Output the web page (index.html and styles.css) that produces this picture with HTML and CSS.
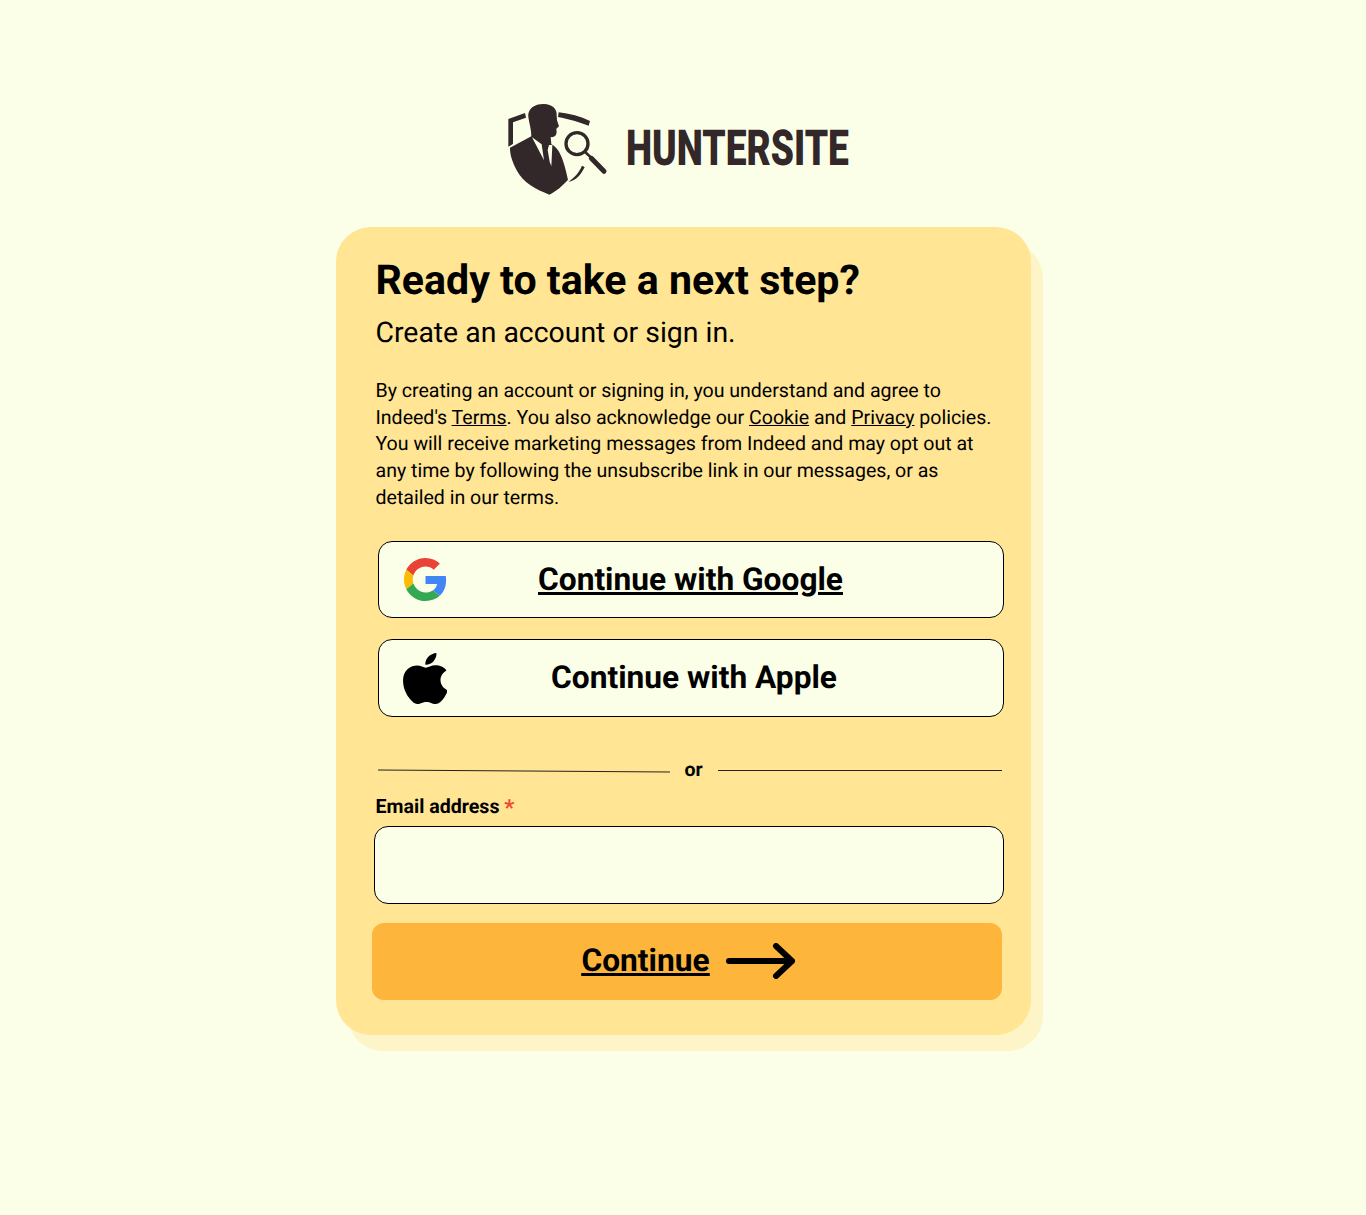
FILE: index.html
```html
<!DOCTYPE html>
<html lang="en">
<head>
<meta charset="utf-8">
<title>Huntersite</title>
<link rel="stylesheet" href="styles.css">
</head>
<body>
<main class="page">
  <header class="brand">
    <svg class="brand-mark" viewBox="0 0 345 315" aria-hidden="true">
      <path class="ink" d="M25 72 L75 54 L78 68 L39 82 L39 146 C36 149 30 152 25 155 Z"/>
      <path class="ink" d="M176 52 C208 56 242 64 270 78 L266 92 C240 82 205 72 174 66 Z"/>
      <path class="ink" d="M85 66 C82 40 106 26 132 27 C156 27 172 42 170 62 L171 76 L177 94 L169 101 L170 112 C169 124 160 128 152 126 L154 148 C178 160 190 190 204 254 C190 270 170 288 148 299 C108 284 70 264 50 226 C36 198 30 180 30 158 L94 124 C94 104 88 86 85 66 Z"/>
      <path class="gap-fill" d="M96 127 L125 148 L127 162 L132 196 Z"/>
      <path class="gap-fill" d="M147 150 L157 150 L154 214 L149 200 L143 165 Z"/>
      <path class="ink" d="M205 260 C224 248 236 234 246 212 L254 216 C242 242 226 258 205 260 Z"/>
      <circle class="ring" cx="231" cy="146" r="33"/>
      <path class="handle-thin" d="M256 172 L274 188"/>
      <path class="handle" d="M274 190 L312 229"/>
    </svg>
    <span class="brand-name">HUNTERSITE</span>
  </header>

  <section class="card">
    <h1 class="title">Ready to take a next step?</h1>
    <p class="subtitle">Create an account or sign in.</p>
    <p class="legal">By creating an account or signing in, you understand and agree to Indeed's <a href="#">Terms</a>. You also acknowledge our <a href="#">Cookie</a> and <a href="#">Privacy</a> policies. You will receive marketing messages from Indeed and may opt out at any time by following the unsubscribe link in our messages, or as detailed in our terms.</p>

    <div class="providers">
      <a class="provider" href="#">
        <svg class="provider-icon" viewBox="0 0 48 48" aria-hidden="true">
          <path fill="#EA4335" d="M24 9.5c3.54 0 6.71 1.22 9.21 3.6l6.85-6.85C35.9 2.38 30.47 0 24 0 14.62 0 6.51 5.38 2.56 13.22l7.98 6.19C12.43 13.72 17.74 9.5 24 9.5z"/>
          <path fill="#4285F4" d="M46.98 24.55c0-1.57-.15-3.09-.38-4.55H24v9.02h12.94c-.58 2.96-2.26 5.48-4.78 7.18l7.73 6c4.51-4.18 7.09-10.36 7.09-17.65z"/>
          <path fill="#FBBC05" d="M10.53 28.59c-.48-1.45-.76-2.99-.76-4.59s.27-3.14.76-4.59l-7.98-6.19C.92 16.46 0 20.12 0 24c0 3.88.92 7.54 2.56 10.78l7.97-6.19z"/>
          <path fill="#34A853" d="M24 48c6.48 0 11.93-2.13 15.89-5.81l-7.73-6c-2.15 1.45-4.92 2.3-8.16 2.3-6.26 0-11.57-4.22-13.47-9.91l-7.98 6.19C6.51 42.62 14.62 48 24 48z"/>
        </svg>
        <span class="provider-label">Continue with Google</span>
      </a>
      <button class="provider provider-apple" type="button">
        <svg class="provider-icon apple-icon" viewBox="2.2 0 19.2 24" preserveAspectRatio="none" aria-hidden="true">
          <path d="M12.152 6.896c-.948 0-2.415-1.078-3.96-1.04-2.04.027-3.91 1.183-4.961 3.014-2.117 3.675-.546 9.103 1.519 12.09 1.013 1.454 2.208 3.09 3.792 3.039 1.52-.065 2.09-.987 3.935-.987 1.831 0 2.35.987 3.96.948 1.637-.026 2.676-1.48 3.676-2.948 1.156-1.688 1.636-3.325 1.662-3.415-.039-.013-3.182-1.221-3.22-4.857-.026-3.04 2.48-4.494 2.597-4.559-1.429-2.09-3.623-2.324-4.39-2.376-2-.156-3.675 1.09-4.61 1.09zM15.53 3.83c.843-1.012 1.4-2.427 1.245-3.83-1.207.052-2.662.805-3.532 1.818-.78.896-1.454 2.338-1.273 3.714 1.338.104 2.715-.688 3.559-1.701"/>
        </svg>
        <span class="provider-label">Continue with Apple</span>
      </button>
    </div>

    <div class="divider">
      <svg class="divider-left" viewBox="0 0 292 4" preserveAspectRatio="none" aria-hidden="true"><path d="M0 1 L292 3"/></svg>
      <span class="divider-text">or</span>
      <span class="divider-right"></span>
    </div>

    <label class="field-label" for="email">Email address <span class="required">*</span></label>
    <input class="field-input" id="email" type="email">

    <a class="submit" href="#">
      <span class="submit-label">Continue</span>
      <svg class="submit-arrow" viewBox="0 0 70 36" aria-hidden="true"><path d="M3 18 H66 M50 3 L66 18 L50 33"/></svg>
    </a>
  </section>
</main>
</body>
</html>
```

FILE: styles.css
```css
* { box-sizing: border-box; }

html, body {
  margin: 0;
  background: #fcffe8;
}

body {
  font-family: Roboto, "Liberation Sans", sans-serif;
  color: #000;
  text-rendering: geometricPrecision;
}

.page {
  display: flex;
  flex-direction: column;
  align-items: center;
  min-height: 1215px;
  padding-top: 95px;
}

.brand {
  display: flex;
  align-items: center;
  height: 105px;
  margin-bottom: 27px;
  margin-right: 17px;
}

.brand-mark {
  width: 115px;
  height: 105px;
  flex: none;
}

.ink { fill: #322729; }
.gap-fill { fill: #fcffe8; }
.ring { fill: none; stroke: #322729; stroke-width: 10; }
.handle-thin { fill: none; stroke: #322729; stroke-width: 8; }
.handle { fill: none; stroke: #322729; stroke-width: 15; stroke-linecap: round; }

.brand-name {
  display: block;
  width: 223px;
  margin: 3px 0 0 10.5px;
  font-weight: 900;
  font-size: 49.5px;
  line-height: 50px;
  color: #322729;
  white-space: nowrap;
  transform: scaleX(0.75);
  transform-origin: left center;
}

.card {
  width: 695px;
  height: 808px;
  padding: 31px 28px 0 40px;
  background: #ffe594;
  border-radius: 35px;
  box-shadow: 12px 16px 0 #fdf5c8;
}

.title {
  margin: 0;
  font-size: 41.1px;
  line-height: 46px;
  font-weight: 700;
}

.subtitle {
  margin: 12px 0 0;
  font-size: 28.4px;
  line-height: 34px;
}

.legal {
  margin: 28px 0 0;
  font-size: 19.56px;
  line-height: 26.7px;
}

.legal a { color: #000; }

.providers {
  display: flex;
  flex-direction: column;
  gap: 21px;
  margin: 29px 0 0 2px;
}

.provider {
  display: grid;
  grid-template-columns: 1fr auto 1fr;
  align-items: center;
  width: 626px;
  height: 77.5px;
  padding: 0 25px;
  background: #fcffe8;
  border: 1px solid #000;
  border-radius: 14px;
  color: #000;
  font-family: inherit;
  text-rendering: inherit;
}

.provider-icon { width: 43px; height: 43px; }

.apple-icon { width: 44px; height: 51px; margin: 1px 0 0 -1px; }

.provider-label {
  font-size: 31.7px;
  font-weight: 700;
  line-height: 40px;
  padding-top: 1px;
}

.provider-apple .provider-label { padding-left: 7px; }

.divider {
  display: flex;
  align-items: center;
  width: 624px;
  height: 24px;
  margin: 42px 0 0 2px;
}

.divider-left {
  width: 292px;
  height: 4px;
  flex: none;
}

.divider-left path {
  stroke: #222;
  stroke-width: 1;
  fill: none;
  vector-effect: non-scaling-stroke;
}

.divider-text {
  width: 48px;
  margin-top: -2px;
  text-align: center;
  font-size: 19.5px;
  font-weight: 700;
}

.divider-right {
  flex: 1;
  height: 1px;
  background: #222;
}

.field-label {
  display: block;
  margin-top: 11px;
  font-size: 19.6px;
  line-height: 26px;
  font-weight: 700;
}

.required {
  color: #f2482f;
  font-size: 22px;
  font-weight: 700;
  line-height: 0;
  vertical-align: -2px;
}

.field-input {
  display: block;
  width: 630px;
  height: 78px;
  margin: 6px 0 0 -2px;
  background: #fcffe8;
  border: 1px solid #000;
  border-radius: 14px;
}

.submit {
  display: flex;
  align-items: center;
  justify-content: center;
  gap: 16px;
  width: 630px;
  height: 77px;
  margin: 19px 0 0 -4px;
  padding-left: 4px;
  background: #feb53c;
  border-radius: 12px;
  color: #000;
}

.submit-label {
  margin-top: -2px;
  font-size: 31.7px;
  font-weight: 700;
  text-decoration: underline;
}

.submit-arrow { width: 70px; height: 36px; }

.submit-arrow path {
  fill: none;
  stroke: #000;
  stroke-width: 6;
  stroke-linecap: round;
  stroke-linejoin: round;
}
```
